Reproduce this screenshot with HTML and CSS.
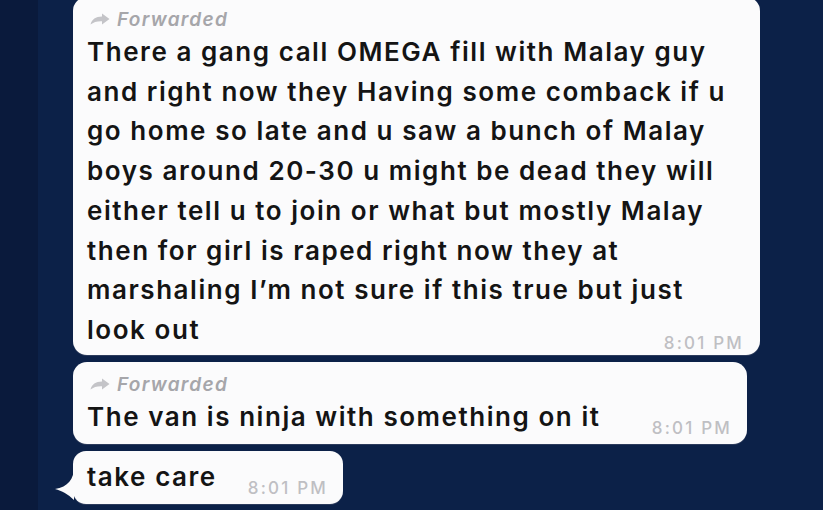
FILE: index.html
```html
<!DOCTYPE html>
<html>
<head>
<meta charset="utf-8">
<link rel="stylesheet" href="styles.css">
</head>
<body>
<div class="screen">
  <div class="rail"></div>
  <div class="chat">
    <div class="bubble bubble-long">
      <div class="fwd">
        <svg class="fwd-icon" width="20" height="12" viewBox="0 0 20 12"><path d="M12 0.5 L19.5 6 L12 11.5 L12 8.2 C7 8 3.5 9.2 0.5 11.5 C2 6.2 5.5 3.8 12 3.6 Z" fill="#c4c4c8"/></svg>
        <span>Forwarded</span>
      </div>
      <div class="msg-stack">
        <p class="msg">There a gang call OMEGA fill with Malay guy<br>and right now they Having some comback if u<br>go home so late and u saw a bunch of Malay<br>boys around 20-30 u might be dead they will<br>either tell u to join or what but mostly Malay<br>then for girl is raped right now they at<br>marshaling I’m not sure if this true but just<br>look out</p>
        <span class="time time-stacked">8:01 PM</span>
      </div>
    </div>
    <div class="bubble bubble-van">
      <div class="fwd">
        <svg class="fwd-icon" width="20" height="12" viewBox="0 0 20 12"><path d="M12 0.5 L19.5 6 L12 11.5 L12 8.2 C7 8 3.5 9.2 0.5 11.5 C2 6.2 5.5 3.8 12 3.6 Z" fill="#c4c4c8"/></svg>
        <span>Forwarded</span>
      </div>
      <div class="msg-row">
        <p class="msg">The van is ninja with something on it</p>
        <span class="time">8:01 PM</span>
      </div>
    </div>
    <div class="bubble bubble-care">
      <svg class="tail" width="22" height="34" viewBox="0 0 22 34"><path d="M20 0 C20 12 14 20 1 22 C8 24 14 27 20 33 Z" fill="#fbfbfc"/></svg>
      <div class="msg-row">
        <p class="msg">take care</p>
        <span class="time">8:01 PM</span>
      </div>
    </div>
  </div>
</div>
</body>
</html>
```

FILE: styles.css
```css
html, body {
  margin: 0;
  padding: 0;
  width: 823px;
  height: 510px;
  overflow: hidden;
  background: #0c2148;
}

.screen {
  display: flex;
  width: 823px;
  height: 510px;
  background: #0c2148;
}

.rail {
  width: 38px;
  flex: none;
  background: #0a1a3c;
}

.chat {
  display: flex;
  flex-direction: column;
  align-items: flex-start;
  gap: 7px;
  padding-left: 35px;
  margin-top: -3px;
}

.bubble {
  position: relative;
  flex: none;
  background: #fbfbfc;
  border-radius: 14px;
  box-shadow: 0 1px 0 #2c3b5c;
  padding: 0 15px 0 14px;
  box-sizing: border-box;
  font-family: "Inter", "Liberation Sans", sans-serif;
}

.bubble-long {
  width: 687px;
  height: 358px;
  padding-top: 11px;
}

.bubble-van {
  width: 674px;
  height: 82px;
  padding-top: 11px;
}

.bubble-care {
  width: 270px;
  height: 53px;
  padding-top: 6px;
  border-radius: 13px;
}

.tail {
  position: absolute;
  left: -19px;
  top: 16px;
}

.fwd {
  display: flex;
  align-items: center;
  gap: 7px;
  height: 22px;
  padding-left: 3px;
  margin-bottom: 2px;
  color: #a6a6aa;
  font-style: italic;
  font-weight: 600;
  font-size: 19px;
  letter-spacing: 1.3px;
}

.fwd-icon {
  flex: none;
}

.msg-stack {
  display: flex;
  flex-direction: column;
}

.msg-row {
  display: flex;
  align-items: flex-end;
  justify-content: space-between;
  gap: 20px;
}

.msg {
  margin: 0;
  font-size: 26px;
  line-height: 39.7px;
  font-weight: 600;
  letter-spacing: 1.55px;
  color: #141414;
  white-space: nowrap;
}

.time {
  font-size: 17px;
  font-weight: 500;
  letter-spacing: 2.2px;
  color: #bfbfc3;
  line-height: 18px;
  margin-bottom: 0;
  white-space: nowrap;
}

.time-stacked {
  align-self: flex-end;
  margin-top: -16px;
  margin-right: 1px;
}
```
